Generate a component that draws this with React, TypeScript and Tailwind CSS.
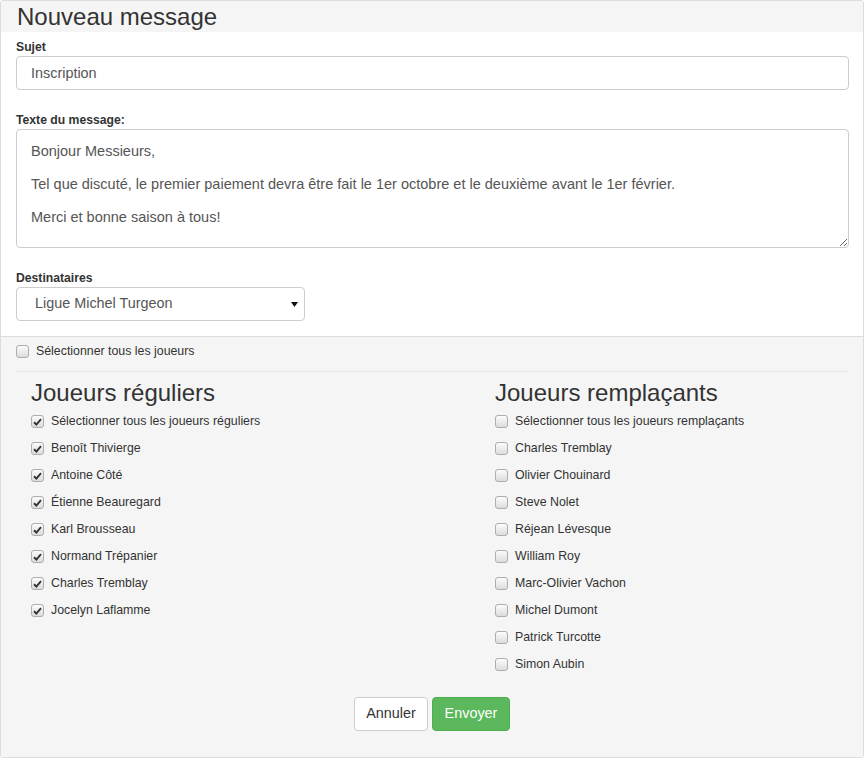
import React from "react";

const regular = [
  "Benoît Thivierge",
  "Antoine Côté",
  "Étienne Beauregard",
  "Karl Brousseau",
  "Normand Trépanier",
  "Charles Tremblay",
  "Jocelyn Laflamme",
];

const subs = [
  "Charles Tremblay",
  "Olivier Chouinard",
  "Steve Nolet",
  "Réjean Lévesque",
  "William Roy",
  "Marc-Olivier Vachon",
  "Michel Dumont",
  "Patrick Turcotte",
  "Simon Aubin",
];

const Box = ({ checked }: { checked?: boolean }) => (
  <span className="relative inline-flex w-[13px] h-[13px] shrink-0 items-center justify-center rounded-[3px] border border-[#adadad] bg-gradient-to-b from-[#fcfcfc] to-[#dcdcdc]">
    {checked && (
      <svg width="9" height="8" viewBox="0 0 9 8" className="block">
        <path d="M1 4.2 L3.4 6.5 L8 1.2" fill="none" stroke="#333" strokeWidth="1.9" />
      </svg>
    )}
  </span>
);

const Row = ({ label, checked }: { label: string; checked?: boolean }) => (
  <label className="flex items-center gap-[7px] h-[17px] text-[12.35px] leading-[17px] text-[#333]">
    <Box checked={checked} />
    <span>{label}</span>
  </label>
);

export default function App() {
  return (
    <div className="w-[864px] h-[759px] bg-white font-['Liberation_Sans',Arial,sans-serif] text-[#333]">
      <div className="h-[758px] border border-[#dcdcdc] rounded-[3px] overflow-hidden flex flex-col">
        <div className="h-[31px] bg-[#f5f5f5] pl-[16px] text-[24px] leading-[31px] text-[#333]">
          Nouveau message
        </div>

        <div className="bg-white px-[15px] pt-[7px] pb-[15px] border-b border-[#dcdcdc]">
          <div className="text-[12.2px] font-bold leading-[17px]">Sujet</div>
          <input
            defaultValue="Inscription"
            className="block w-[833px] h-[34px] px-[14px] text-[14.4px] text-[#555] border border-[#ccc] rounded-[4px] bg-white outline-none"
          />

          <div className="mt-[22px] text-[12.2px] font-bold leading-[17px]">Texte du message:</div>
          <div className="w-[833px] h-[119px] resize-y overflow-auto px-[14px] pt-[11px] text-[14.5px] leading-[20px] text-[#555] border border-[#ccc] rounded-[4px]">
            <p className="mb-[13px]">Bonjour Messieurs,</p>
            <p className="mb-[13px]">
              Tel que discuté, le premier paiement devra être fait le 1er octobre et le deuxième avant le 1er février.
            </p>
            <p>Merci et bonne saison à tous!</p>
          </div>

          <div className="mt-[22px] text-[12.2px] font-bold leading-[17px]">Destinataires</div>
          <div className="w-[289px] h-[34px] flex items-center justify-between pl-[18px] pr-[6px] text-[14.4px] text-[#555] border border-[#ccc] rounded-[4px] bg-white">
            <span>Ligue Michel Turgeon</span>
            <svg width="7" height="5" viewBox="0 0 7 5">
              <path d="M0 0 H7 L3.5 5 Z" fill="#111" />
            </svg>
          </div>
        </div>

        <div className="flex-1 bg-[#f5f5f5] px-[15px] pt-[6px]">
          <Row label="Sélectionner tous les joueurs" />
          <div className="mt-[11px] w-[833px] border-t border-[#e6e6e6]" />

          <div className="grid grid-cols-[464px_1fr] pl-[15px] pt-[8px]">
            <div>
              <h3 className="text-[24px] leading-[26px] mb-[7px]">Joueurs réguliers</h3>
              <div className="flex flex-col gap-[10px]">
                <Row label="Sélectionner tous les joueurs réguliers" checked />
                {regular.map((n) => (
                  <Row key={n} label={n} checked />
                ))}
              </div>
            </div>
            <div>
              <h3 className="text-[24px] leading-[26px] mb-[7px]">Joueurs remplaçants</h3>
              <div className="flex flex-col gap-[10px]">
                <Row label="Sélectionner tous les joueurs remplaçants" />
                {subs.map((n) => (
                  <Row key={n} label={n} />
                ))}
              </div>
            </div>
          </div>

          <div className="flex justify-center gap-[4px] mt-[24px]">
            <button className="h-[34px] w-[74px] text-[14.4px] text-[#333] bg-white border border-[#ccc] rounded-[4px]">
              Annuler
            </button>
            <button className="h-[34px] w-[78px] text-[14.4px] text-white bg-[#5cb85c] border border-[#4cae4c] rounded-[4px]">
              Envoyer
            </button>
          </div>
        </div>
      </div>
    </div>
  );
}
